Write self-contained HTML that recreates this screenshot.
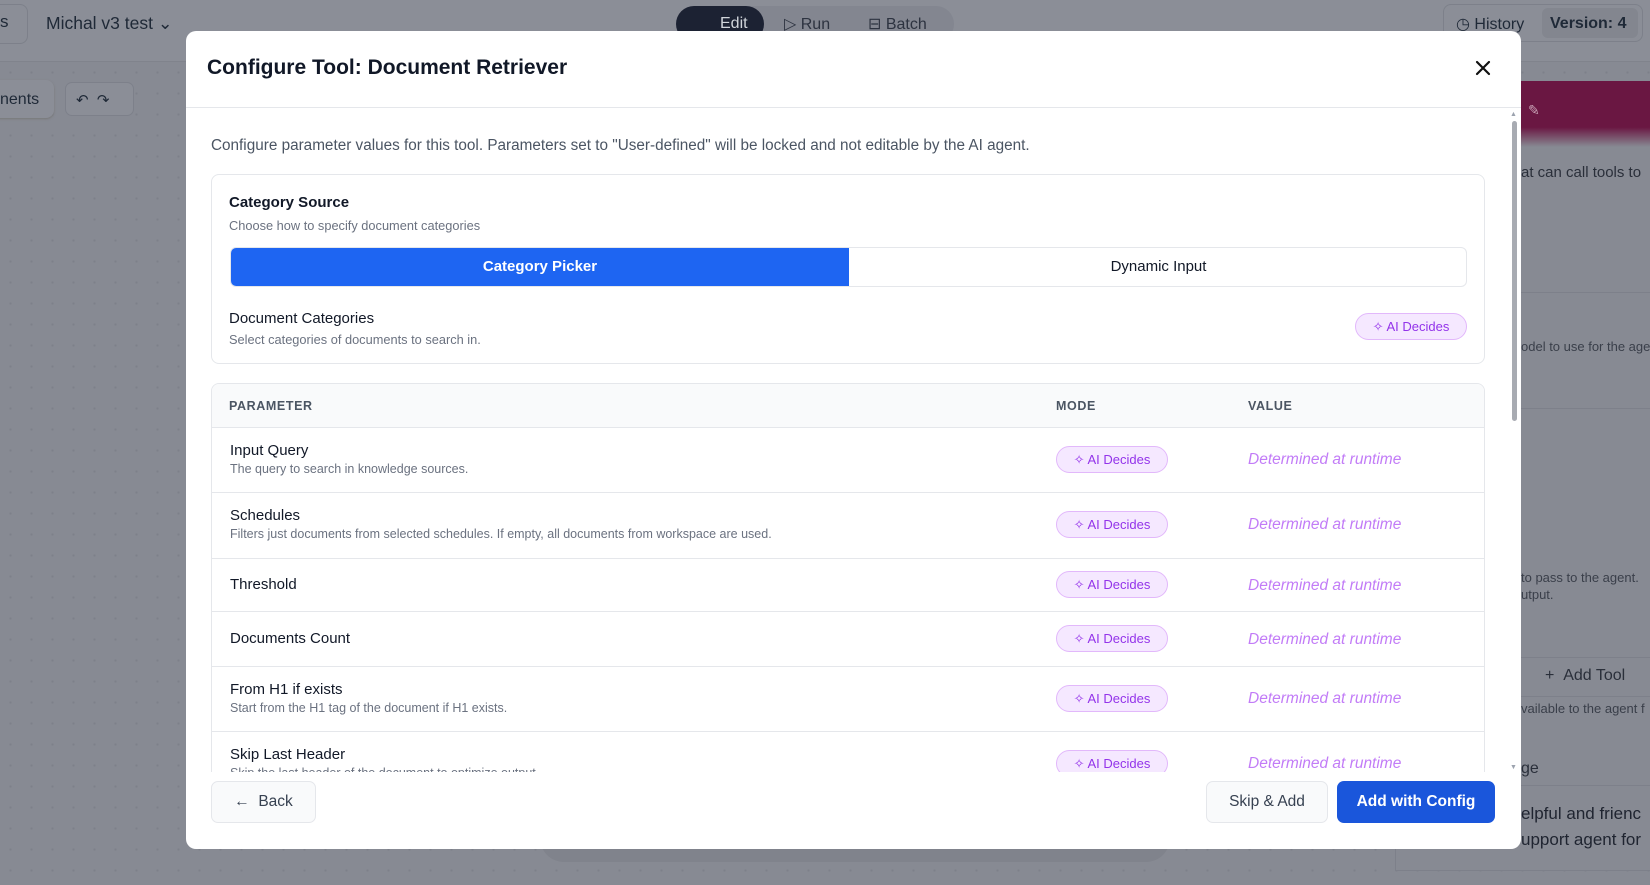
<!DOCTYPE html>
<html><head><meta charset="utf-8"><style>
*{box-sizing:border-box;margin:0;padding:0}
body{width:1650px;height:885px;overflow:hidden;position:relative;background:#878a93;font-family:"Liberation Sans",sans-serif;color:#111827}
.abs{position:absolute}
.dots{background-image:radial-gradient(#7d808a 1px,transparent 1.2px);background-size:21px 21px}
.modal{left:186px;top:31px;width:1335px;height:818px;background:#fff;border-radius:10px;overflow:hidden}
.badge{position:absolute;height:27px;border:1px solid #e2b8fb;background:#f5e8ff;border-radius:14px;color:#9333ea;font-size:13px;display:flex;align-items:center;justify-content:center;gap:6px}
.val{position:absolute;left:1062px;color:#c27cf7;font-style:italic;font-size:15.5px}
.row{position:absolute;left:0;width:1274px;border-top:1px solid #e5e7eb}
.pn{position:absolute;left:18px;font-size:15px;color:#111827}
.pd{position:absolute;left:18px;font-size:12.5px;color:#6b7280}
.btn{position:absolute;border-radius:7px;font-size:15.5px;display:flex;align-items:center;justify-content:center}
</style></head><body>
<div class="abs dots" style="left:0;top:62px;width:1650px;height:823px"></div>
<div class="abs" style="left:0;top:0;width:1650px;height:62px;background:#8b8e97;border-bottom:1px solid #80838c"></div>
<div class="abs" style="left:-10px;top:4px;width:38px;height:40px;border:1px solid #7d808a;border-radius:8px"></div>
<div class="abs" style="left:0;top:12px;font-size:17px;color:#1f2937">s</div>
<div class="abs" style="left:46px;top:13px;font-size:17.5px;color:#1f2937">Michal v3 test ⌄</div>
<div class="abs" style="left:676px;top:6px;width:278px;height:36px;background:#838690;border-radius:18px"></div>
<div class="abs" style="left:676px;top:6px;width:88px;height:36px;background:#1c2233;border-radius:18px;color:#d1d5db;font-size:16px;padding:9px 0 0 44px">Edit</div>
<div class="abs" style="left:784px;top:14px;font-size:16px;color:#2d3340">▷ Run</div>
<div class="abs" style="left:868px;top:14px;font-size:16px;color:#2d3340">⊟ Batch</div>
<div class="abs" style="left:1443px;top:4px;width:200px;height:38px;border:1px solid #7d808a;border-radius:8px"></div>
<div class="abs" style="left:1456px;top:14px;font-size:16px;color:#1f2937">◷ History</div>
<div class="abs" style="left:1542px;top:8px;width:96px;height:30px;background:#83868f;border-radius:6px;font-size:16px;font-weight:bold;color:#1f2937;padding:7px 0 0 8px">Version: 4</div>
<div class="abs" style="left:-10px;top:80px;width:64px;height:38px;background:#8b8e97;border-radius:8px;box-shadow:0 1px 2px #777"></div>
<div class="abs" style="left:0;top:91px;font-size:16px;color:#1f2937">nents</div>
<div class="abs" style="left:65px;top:82px;width:69px;height:34px;border:1px solid #7d808a;border-radius:7px;background:#8b8e97;font-size:15px;color:#1f2937;padding:8px 0 0 10px">↶ &nbsp;↷</div>
<div class="abs" style="left:540px;top:820px;width:630px;height:42px;background:#80838c;border-radius:0 0 24px 24px"></div>
<div class="abs" style="left:1395px;top:81px;width:260px;height:790px;background:#878a93;border:1px solid #7d808a"></div>
<div class="abs" style="left:1395px;top:81px;width:260px;height:66px;background:linear-gradient(#6a1742 70%,#878a93)"></div>
<div class="abs" style="left:1528px;top:102px;font-size:14px;color:#c9a3b6">✎</div>
<div class="abs" style="left:1521px;top:164px;font-size:15px;color:#2a2f3a;white-space:nowrap">at can call tools to</div>
<div class="abs" style="left:1521px;top:292px;width:130px;border-top:1px solid #7d808a"></div>
<div class="abs" style="left:1521px;top:339px;font-size:13px;color:#3a3f4a;white-space:nowrap">odel to use for the age</div>
<div class="abs" style="left:1521px;top:408px;width:130px;border-top:1px solid #7d808a"></div>
<div class="abs" style="left:1521px;top:569px;font-size:13px;color:#3a3f4a;white-space:nowrap;line-height:17px">to pass to the agent.<br>utput.</div>
<div class="abs" style="left:1521px;top:657px;width:130px;border-top:1px solid #7d808a"></div>
<div class="abs" style="left:1545px;top:667px;font-size:16px;color:#2a2f3a">+ &nbsp;Add Tool</div>
<div class="abs" style="left:1521px;top:696px;width:130px;border-top:1px solid #7d808a"></div>
<div class="abs" style="left:1521px;top:701px;font-size:13px;color:#3a3f4a;white-space:nowrap">vailable to the agent f</div>
<div class="abs" style="left:1521px;top:760px;font-size:16px;color:#2a2f3a">ge</div>
<div class="abs" style="left:1521px;top:785px;width:130px;border-top:1px solid #7d808a"></div>
<div class="abs" style="left:1521px;top:801px;font-size:17px;color:#1f2430;white-space:nowrap;line-height:26px">elpful and frienc<br>upport agent for</div>

<div class="abs modal">
  <div class="abs" style="left:21px;top:25px;font-size:21px;font-weight:bold;color:#111827">Configure Tool: Document Retriever</div>
  <svg class="abs" style="left:1289px;top:29px" width="16" height="16" viewBox="0 0 16 16"><path d="M2 2L14 14M14 2L2 14" stroke="#111" stroke-width="2.2" stroke-linecap="round"/></svg>
  <div class="abs" style="left:0;top:76px;width:1335px;border-top:1px solid #e5e7eb"></div>
  <div class="abs" style="left:1324px;top:80px;font-size:7px;color:#9ca3af">▲</div>
  <div class="abs" style="left:1326px;top:90px;width:5px;height:300px;background:#a8abb2;border-radius:3px"></div>
  <div class="abs" style="left:1324px;top:733px;font-size:7px;color:#9ca3af">▼</div>

  <div class="abs" style="left:0;top:77px;width:1320px;height:664px;overflow:hidden">
    <div class="abs" style="left:25px;top:29px;font-size:15.3px;color:#4b5563;white-space:nowrap">Configure parameter values for this tool. Parameters set to "User-defined" will be locked and not editable by the AI agent.</div>
    <div class="abs" style="left:25px;top:66px;width:1274px;height:190px;border:1px solid #e5e7eb;border-radius:8px">
      <div class="abs" style="left:17px;top:19px;font-size:15px;font-weight:bold;color:#111827">Category Source</div>
      <div class="abs" style="left:17px;top:43px;font-size:12.8px;color:#6b7280">Choose how to specify document categories</div>
      <div class="abs" style="left:18px;top:72px;width:1237px;height:40px;border:1px solid #e5e7eb;border-radius:6px;overflow:hidden">
        <div class="abs" style="left:0;top:0;width:618px;height:40px;background:#1e65f2;color:#fff;font-size:15px;font-weight:bold;text-align:center;line-height:38px">Category Picker</div>
        <div class="abs" style="left:618px;top:0;width:619px;height:40px;color:#111827;font-size:15px;text-align:center;line-height:38px">Dynamic Input</div>
      </div>
      <div class="abs" style="left:17px;top:135px;font-size:15px;color:#111827">Document Categories</div>
      <div class="abs" style="left:17px;top:157px;font-size:12.8px;color:#6b7280">Select categories of documents to search in.</div>
      <div class="badge" style="left:1143px;top:138px;width:112px">✧ AI Decides</div>
    </div>
    <div class="abs" style="left:25px;top:275px;width:1274px;height:420px;border:1px solid #e5e7eb;border-radius:8px 8px 0 0;overflow:hidden">
      <div class="abs" style="left:0;top:0;width:1274px;height:43px;background:#f9fafb"></div>
      <div class="abs" style="left:17px;top:15px;font-size:12.5px;font-weight:bold;letter-spacing:.6px;color:#4b5563">PARAMETER</div>
      <div class="abs" style="left:844px;top:15px;font-size:12.5px;font-weight:bold;letter-spacing:.6px;color:#4b5563">MODE</div>
      <div class="abs" style="left:1036px;top:15px;font-size:12.5px;font-weight:bold;letter-spacing:.6px;color:#4b5563">VALUE</div>

      <div class="row" style="top:43px;height:65px"><div class="pn" style="top:14px">Input Query</div><div class="pd" style="top:34px">The query to search in knowledge sources.</div><div class="badge" style="left:844px;top:18px;width:112px">✧ AI Decides</div><div class="val" style="left:1036px;top:23px">Determined at runtime</div></div>
      <div class="row" style="top:108px;height:66px"><div class="pn" style="top:14px">Schedules</div><div class="pd" style="top:34px">Filters just documents from selected schedules. If empty, all documents from workspace are used.</div><div class="badge" style="left:844px;top:18px;width:112px">✧ AI Decides</div><div class="val" style="left:1036px;top:23px">Determined at runtime</div></div>
      <div class="row" style="top:174px;height:53px"><div class="pn" style="top:17px">Threshold</div><div class="badge" style="left:844px;top:12px;width:112px">✧ AI Decides</div><div class="val" style="left:1036px;top:18px">Determined at runtime</div></div>
      <div class="row" style="top:227px;height:55px"><div class="pn" style="top:18px">Documents Count</div><div class="badge" style="left:844px;top:13px;width:112px">✧ AI Decides</div><div class="val" style="left:1036px;top:19px">Determined at runtime</div></div>
      <div class="row" style="top:282px;height:65px"><div class="pn" style="top:14px">From H1 if exists</div><div class="pd" style="top:34px">Start from the H1 tag of the document if H1 exists.</div><div class="badge" style="left:844px;top:18px;width:112px">✧ AI Decides</div><div class="val" style="left:1036px;top:23px">Determined at runtime</div></div>
      <div class="row" style="top:347px;height:65px"><div class="pn" style="top:14px">Skip Last Header</div><div class="pd" style="top:34px">Skip the last header of the document to optimize output.</div><div class="badge" style="left:844px;top:18px;width:112px">✧ AI Decides</div><div class="val" style="left:1036px;top:23px">Determined at runtime</div></div>
    </div>
  </div>
  <div class="btn" style="left:25px;top:750px;width:105px;height:42px;border:1px solid #e5e7eb;background:#f9fafb;color:#374151">← &nbsp;Back</div>
  <div class="btn" style="left:1020px;top:750px;width:122px;height:42px;border:1px solid #e5e7eb;background:#f9fafb;color:#374151">Skip &amp; Add</div>
  <div class="btn" style="left:1151px;top:750px;width:158px;height:42px;background:#1a56db;color:#fff;font-weight:bold">Add with Config</div>
</div>
</body></html>
